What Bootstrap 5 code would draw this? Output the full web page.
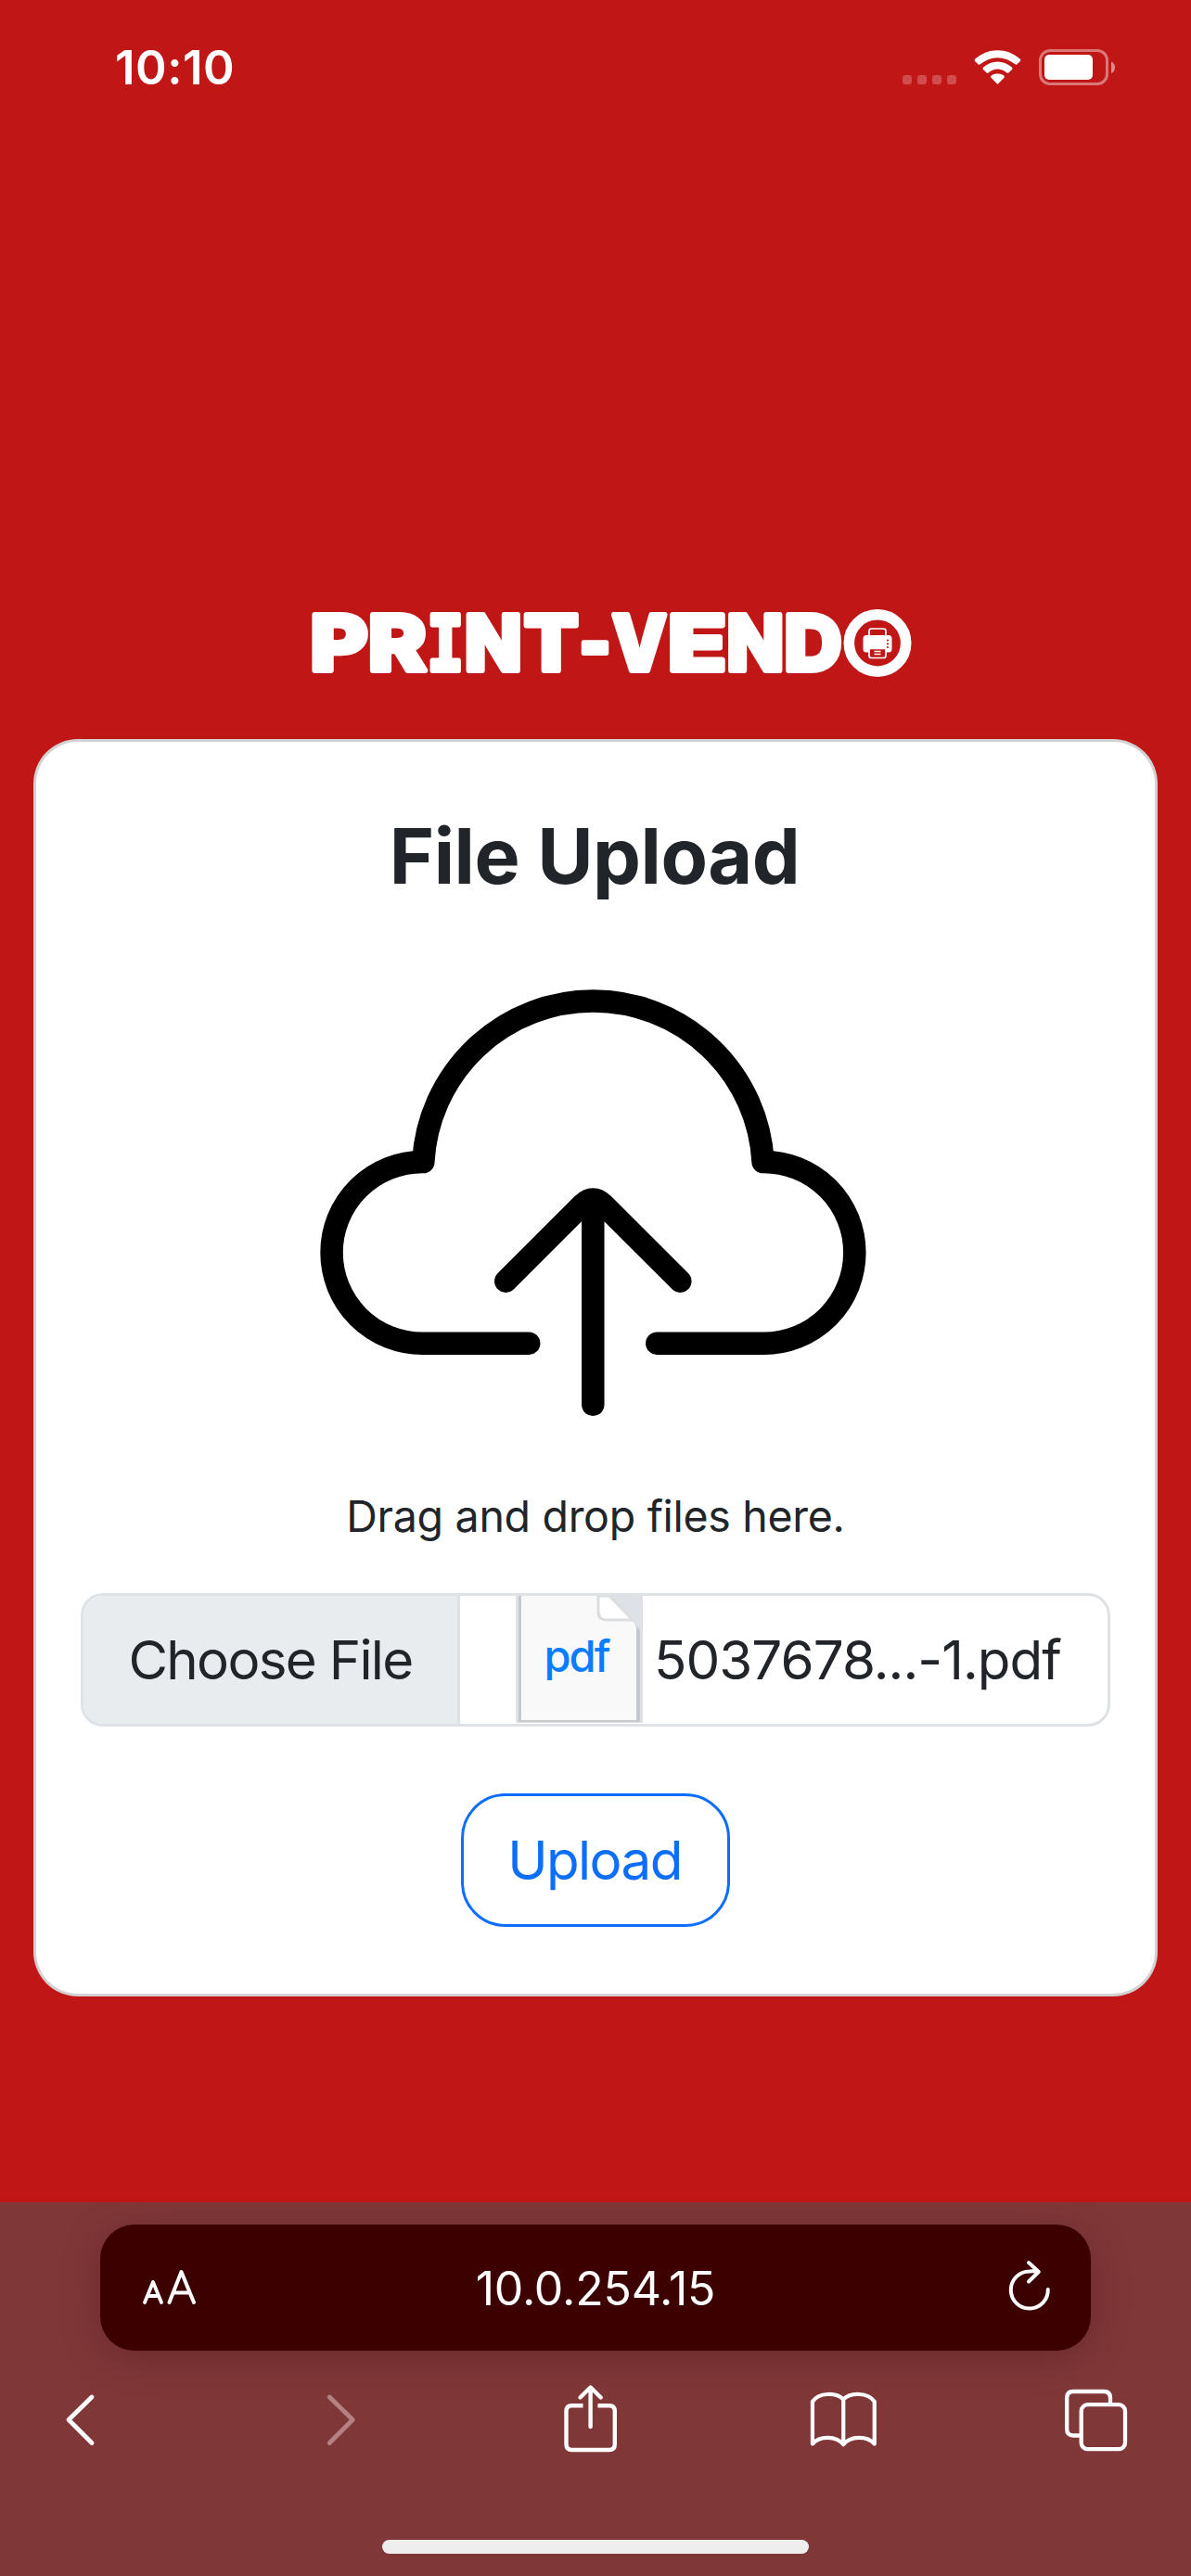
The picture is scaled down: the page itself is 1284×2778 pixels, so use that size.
<!DOCTYPE html>
<html lang="en">
<head>
<meta charset="utf-8">
<meta name="viewport" content="width=device-width, initial-scale=1">
<title>Print-Vendo</title>
<link href="https://cdn.jsdelivr.net/npm/bootstrap@5.3.0/dist/css/bootstrap.min.css" rel="stylesheet">
<style>
  body { font-family: Inter, "Liberation Sans", sans-serif; background: #c11616; color: #212529; min-height: 2778px; font-size: 46.5px; }
  svg { display: block; flex: none; }
  .status-bar { height: 146px; padding: 0 80px 0 124px; }
  .clock { font-size: 51px; font-weight: 600; line-height: 146px; letter-spacing: .5px; }
  .site { height: 2229px; padding: 494px 36px 0; }
  .upload-card { width: 1212px; height: 1356px; margin-top: 47px; border: 3px solid rgba(0,0,0,.176); border-radius: 48px; background: #fff; background-clip: border-box; padding: 73px 48px 0; }
  .upload-title { font-size: 82.5px; font-weight: 700; line-height: 100px; letter-spacing: -.5px; padding-right: 2px; }
  .cloud { margin-top: 67px; }
  .hint { font-size: 46.5px; line-height: 70px; margin-top: 50px; letter-spacing: -.3px; }
  .file-field { width: 1110px; height: 144px; margin-top: 48px; border: 3px solid #dee2e6; border-radius: 24px; padding: 0; overflow: hidden; font-size: 58.3px; line-height: 1; }
  .file-button { width: 406px; background: #e9ecef; border-right: 3px solid #dee2e6; letter-spacing: -1.7px; }
  .doc { margin-left: 60px; align-self: flex-start; }
  .file-label { margin-left: 12px; letter-spacing: -.95px; padding-top: 1px; }
  .send { width: 290px; height: 144px; margin-top: 72px; border-width: 3px; border-radius: 48px; font-size: 58.3px; line-height: 1; padding: 0 2px 0 0; letter-spacing: -1.6px; }
  .browser-bar { height: 403px; background: #803738; padding-top: 24px; overflow: hidden; }
  .address { width: 1068px; height: 136px; border-radius: 37px; background: #3c0000; box-shadow: 0 8px 44px rgba(40,0,0,.24); padding: 0 42px 0 44px; font-size: 50px; line-height: 136px; }
  .url { padding-top: 2px; letter-spacing: -.2px; }
  .toolbar { height: 148px; padding: 0 64px 0 49px; }
  .home-line { width: 460px; height: 15px; border-radius: 8px; background: #eee; margin-top: 56px; }
</style>
</head>
<body class="d-flex flex-column">
<header class="status-bar d-flex justify-content-between align-items-center text-white">
  <span class="clock">10:10</span>
  <svg width="236" height="50" viewBox="968 48 236 50" fill="#fff">
    <g fill-opacity=".24"><rect x="973" y="81" width="10" height="10" rx="3"/><rect x="989" y="81" width="10" height="10" rx="3"/><rect x="1005" y="81" width="10" height="10" rx="3"/><rect x="1021" y="81" width="10" height="10" rx="3"/></g>
    <path d="M1051.300 66.200Q1050 64.800 1051.300 63.500C1065.500 51 1085.500 51 1099.700 63.500Q1101 64.800 1099.700 66.200L1096.500 69.200Q1095.300 70.200 1094 69.100C1083 59.800 1068 59.800 1057 69.100Q1055.700 70.200 1054.500 69.200Z"/>
    <path d="M1060 75Q1058.700 73.800 1060.100 72.500C1069.500 64.500 1081.500 64.500 1090.900 72.500Q1092.300 73.800 1091 75L1087.600 78.300Q1086.400 79.300 1085.100 78.300C1079 73.300 1072 73.300 1065.900 78.300Q1064.600 79.300 1063.400 78.300Z"/>
    <path d="M1068.500 83.800Q1067.300 82.500 1068.800 81.400C1072.800 78.800 1078.200 78.800 1082.200 81.400Q1083.700 82.500 1082.500 83.800L1076.500 90Q1075.500 91 1074.500 90Z"/>
    <rect x="1121.500" y="54.500" width="72" height="36" rx="10.500" fill="none" stroke="#fff" stroke-opacity=".42" stroke-width="3"/>
    <rect x="1126" y="59" width="52" height="27" rx="5"/>
    <path d="M1198 66.500C1203.400 68.500 1203.400 77 1198 79Z" fill-opacity=".5"/>
  </svg>
</header>

<main class="site d-flex flex-column align-items-center">
  <svg class="logo" width="660" height="110" viewBox="312 640 660 110" overflow="visible">
    <text y="722.500" fill="#fff" stroke="#fff" stroke-width="6" stroke-linejoin="round" font-family="Inter, sans-serif" font-weight="800" font-size="82.500"><tspan x="334.500" textLength="62" lengthAdjust="spacingAndGlyphs">P</tspan><tspan x="397" textLength="62.500" lengthAdjust="spacingAndGlyphs">R</tspan><tspan x="460.500" textLength="39.500" lengthAdjust="spacingAndGlyphs" font-family="DejaVu Sans Mono, monospace" font-weight="700">I</tspan><tspan x="501" textLength="61.500" lengthAdjust="spacingAndGlyphs">N</tspan><tspan x="565" textLength="58.500" lengthAdjust="spacingAndGlyphs">T</tspan><tspan x="624.500" textLength="34" lengthAdjust="spacingAndGlyphs">-</tspan><tspan x="660" textLength="58.500" lengthAdjust="spacingAndGlyphs">V</tspan><tspan x="720" textLength="63" lengthAdjust="spacingAndGlyphs">E</tspan><tspan x="783.500" textLength="61.500" lengthAdjust="spacingAndGlyphs">N</tspan><tspan x="845.500" textLength="62" lengthAdjust="spacingAndGlyphs">D</tspan></text>
    <circle cx="946" cy="693.500" r="30.700" fill="none" stroke="#fff" stroke-width="11.600"/>
    <g fill="#fff">
      <path d="M937 687V680.500Q937 678 939.500 678H952.500Q955 678 955 680.500V687" fill="none" stroke="#fff" stroke-width="1.700"/>
      <path d="M934 685H958Q961.500 685 961.500 688.500V700Q961.500 703.500 958 703.500H955V699H937V703.500H934Q930.500 703.500 930.500 700V688.500Q930.500 685 934 685Z"/>
      <path d="M937 699.500V707Q937 709.500 939.500 709.500H952.500Q955 709.500 955 707V699.500Z" fill="#c11616" stroke="#fff" stroke-width="1.700"/>
      <path d="M942.500 702.500H949.500M942.500 705.500H949.500" stroke="#fff" stroke-width="1.500"/>
    </g>
    <g fill="#c11616"><circle cx="957" cy="690.500" r="1.100"/><circle cx="957" cy="694.300" r="1.100"/><circle cx="957" cy="698" r="1.100"/></g>
  </svg>

  <section class="card upload-card align-items-center">
    <h1 class="upload-title mb-0">File Upload</h1>
    <svg class="cloud" width="640" height="510" viewBox="322 1040 640 510" fill="none" stroke="#000" stroke-width="24.500" stroke-linecap="round" stroke-linejoin="round">
      <path d="M570.200 1448.700H455.400A97.800 97.800 0 0 1 455.400 1253H456.300A183.420 183.420 0 0 1 822.600 1253H823.500A97.800 97.800 0 0 1 823.500 1448.700H708.300"/>
      <path d="M545.300 1381.700L627.800 1299.200Q639.300 1287.800 650.800 1299.200L733.300 1381.700M639.300 1296V1514.800"/>
    </svg>
    <p class="hint mb-0">Drag and drop files here.</p>
    <div class="form-control file-field d-flex align-items-stretch flex-shrink-0">
      <span class="file-button d-flex align-items-center justify-content-center">Choose File</span>
      <svg class="doc" width="137" height="137" viewBox="556 1720 137 137">
        <path d="M556 1720H693V1857H556Z" fill="#dee2e6"/>
        <path d="M559 1720H655Q688 1752 690 1758V1856H559Z" fill="#c6c9cc"/>
        <path d="M562 1720H656Q685 1747 686 1754V1854H562Z" fill="#f9f9f9"/>
        <path d="M645 1720V1737Q645 1746 654 1746H682L657 1720Z" fill="#fff" stroke="#dcdddf" stroke-width="3"/>
        <text x="586.500" y="1802" font-family="Inter, sans-serif" font-size="47" font-weight="500" textLength="72" fill="#0a7cff">pdf</text>
      </svg>
      <span class="file-label d-flex align-items-center">5037678...-1.pdf</span>
    </div>
    <button type="button" class="btn btn-outline-primary send flex-shrink-0">Upload</button>
  </section>
</main>

<footer class="browser-bar d-flex flex-column align-items-center text-white">
  <div class="address d-flex align-items-center justify-content-between flex-shrink-0">
    <svg width="60" height="44" viewBox="153 2446 60 44" fill="none" stroke="#fff" stroke-width="4" stroke-linecap="round" stroke-linejoin="round"><path d="M157 2484L166 2462L175 2484M160 2477H172" stroke-width="3.800"/><path d="M183.500 2484L196.500 2451L210 2484M188 2473.500H205"/></svg>
    <span class="url">10.0.254.15</span>
    <svg width="62" height="60" viewBox="1072 2438 62 60" fill="none" stroke="#fff" stroke-width="4" stroke-linecap="round" stroke-linejoin="round"><path d="M1129.800 2470A20 20 0 1 1 1109.800 2450.500Q1115 2450 1119.500 2451M1109 2441L1119.800 2451L1109 2461.500"/></svg>
  </div>
  <nav class="toolbar w-100 d-flex align-items-center justify-content-between flex-shrink-0" aria-label="Browser">
    <svg width="76" height="80" viewBox="49 2569 76 80" fill="none" stroke="#fff" stroke-width="4.800" stroke-linecap="round" stroke-linejoin="round"><path d="M99 2585L74 2609.500L99 2634.500"/></svg>
    <svg width="76" height="80" viewBox="322.750 2569 76 80" fill="none" stroke="#b48082" stroke-width="4.800" stroke-linecap="round" stroke-linejoin="round"><path d="M355 2585L380 2609.500L355 2634.500"/></svg>
    <svg width="76" height="80" viewBox="596.500 2569 76 80" fill="none" stroke="#fff" stroke-width="4.400" stroke-linejoin="round"><path d="M628 2594.300H616Q610 2594.300 610 2600.300V2636Q610 2642 616 2642H656.300Q662.300 2642 662.300 2636V2600.300Q662.300 2594.300 656.300 2594.300H644"/><path d="M625 2585.500L636.100 2574.500L647.200 2585.500M636.100 2575V2617" stroke-linecap="round"/></svg>
    <svg width="76" height="80" viewBox="870.250 2569 76 80" fill="none" stroke="#fff" stroke-width="4.200" stroke-linejoin="round"><path d="M909.500 2587.500C902 2580 883 2579.500 876.200 2590V2635.500C884 2626.500 902 2626.500 909.500 2636.200C917 2626.500 935 2626.500 943 2635.500V2590C936 2579.500 917 2580 909.500 2587.500V2636"/></svg>
    <svg width="76" height="80" viewBox="1144 2569 76 80" fill="none" stroke="#fff" stroke-width="4.300"><path d="M1164 2626.500H1157.200Q1150.200 2626.500 1150.200 2619.500V2586Q1150.200 2579 1157.200 2579H1190Q1197 2579 1197 2586V2592"/><rect x="1165.700" y="2593.200" width="47.300" height="48" rx="7"/></svg>
  </nav>
  <div class="home-line flex-shrink-0"></div>
</footer>
<script src="https://cdn.jsdelivr.net/npm/bootstrap@5.3.0/dist/js/bootstrap.bundle.min.js"></script>
</body>
</html>
